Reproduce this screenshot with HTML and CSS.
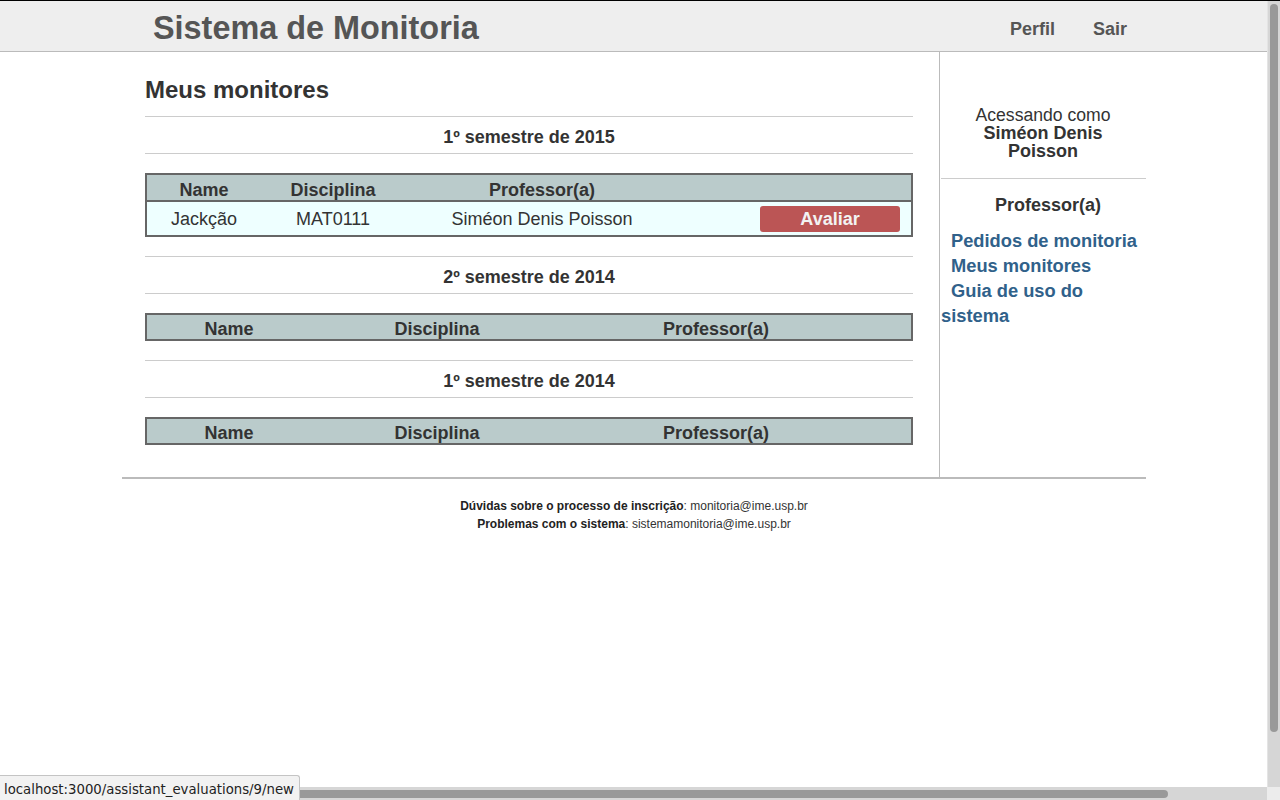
FILE: index.html
```html
<!DOCTYPE html>
<html lang="pt-BR">
<head>
<meta charset="utf-8">
<title>Sistema de Monitoria</title>
<link rel="stylesheet" href="styles.css">
</head>
<body>
<div class="page">
  <header class="topbar">
    <div class="topbar-inner">
      <h1 class="brand">Sistema de Monitoria</h1>
      <nav class="topnav">
        <a href="#">Perfil</a>
        <a href="#">Sair</a>
      </nav>
    </div>
  </header>

  <div class="container">
    <main class="main">
      <h2 class="page-title">Meus monitores</h2>

      <section class="semester">
        <h3 class="semester-title">1º semestre de 2015</h3>
        <table class="grid">
          <thead>
            <tr>
              <th class="a1">Name</th>
              <th class="a2">Disciplina</th>
              <th class="a3">Professor(a)</th>
              <th class="a4"></th>
            </tr>
          </thead>
          <tbody>
            <tr>
              <td>Jackção</td>
              <td>MAT0111</td>
              <td>Siméon Denis Poisson</td>
              <td class="act"><a class="btn" href="#">Avaliar</a></td>
            </tr>
          </tbody>
        </table>
      </section>

      <section class="semester">
        <h3 class="semester-title">2º semestre de 2014</h3>
        <table class="grid empty">
          <thead>
            <tr>
              <th class="b1">Name</th>
              <th class="b2">Disciplina</th>
              <th class="b3">Professor(a)</th>
              <th class="b4"></th>
            </tr>
          </thead>
        </table>
      </section>

      <section class="semester">
        <h3 class="semester-title">1º semestre de 2014</h3>
        <table class="grid empty">
          <thead>
            <tr>
              <th class="b1">Name</th>
              <th class="b2">Disciplina</th>
              <th class="b3">Professor(a)</th>
              <th class="b4"></th>
            </tr>
          </thead>
        </table>
      </section>
    </main>

    <aside class="sidebar">
      <div class="user">
        <span class="user-label">Acessando como</span><br>
        <strong>Siméon Denis Poisson</strong>
      </div>
      <hr class="side-rule">
      <div class="role">Professor(a)</div>
      <ul class="side-links">
        <li><a href="#">Pedidos de monitoria</a></li>
        <li><a href="#">Meus monitores</a></li>
        <li><a href="#">Guia de uso do sistema</a></li>
      </ul>
    </aside>
  </div>

  <footer class="footer">
    <p><strong>Dúvidas sobre o processo de inscrição</strong>: monitoria@ime.usp.br</p>
    <p><strong>Problemas com o sistema</strong>: sistemamonitoria@ime.usp.br</p>
  </footer>
</div>

<div class="vscroll"><div class="vthumb"></div></div>
<div class="hscroll"><div class="hthumb"></div></div>
<div class="scroll-corner"></div>
<div class="status">localhost:3000/assistant_evaluations/9/new</div>
</body>
</html>
```

FILE: styles.css
```css
html {
  border-top: 1px solid #000;
}
body {
  margin: 0 12px 0 0;
  font-family: "Liberation Sans", Arial, sans-serif;
  color: #333;
  background: #fff;
}
a {
  text-decoration: none;
}

/* header */
.topbar {
  background: #eeeeee;
  border-bottom: 1px solid #bbbbbb;
  height: 50px;
}
.topbar-inner {
  width: 1024px;
  margin: 0 auto;
  box-sizing: border-box;
  display: flex;
  justify-content: space-between;
  align-items: flex-start;
  padding: 0 19px 0 31px;
}
.brand {
  margin: 0;
  padding-top: 9px;
  font-size: 32.4px;
  line-height: 36px;
  font-weight: bold;
  color: #555;
}
.topnav {
  display: flex;
  gap: 38px;
  padding-top: 19px;
}
.topnav a {
  font-size: 18px;
  line-height: 18px;
  font-weight: bold;
  color: #555;
}

/* layout */
.container {
  width: 1024px;
  margin: 0 auto;
  display: flex;
}
.main {
  width: 818px;
  box-sizing: border-box;
  padding: 24px 26px 13px 23px;
  border-right: 1px solid #bbbbbb;
}
.page-title {
  margin: 0 0 12px;
  font-size: 24px;
  line-height: 28px;
  font-weight: bold;
  color: #333;
}

.semester {
  margin-bottom: 19px;
}
.semester-title {
  margin: 0 0 19px;
  border-top: 1px solid #cccccc;
  border-bottom: 1px solid #cccccc;
  padding: 10px 0 6px;
  text-align: center;
  font-size: 18px;
  line-height: 20px;
  font-weight: bold;
  color: #333;
}

/* tables */
.grid {
  width: 768px;
  border: 2px solid #666666;
  border-collapse: separate;
  border-spacing: 0;
  table-layout: fixed;
  font-size: 18px;
  color: #333;
}
.grid th {
  background: #bacbcb;
  height: 21px;
  padding: 4px 0 0;
  line-height: 20px;
  font-weight: bold;
  text-align: center;
  vertical-align: middle;
}
.grid.empty th {
  height: 20px;
}
.grid td {
  background: #eeffff;
  height: 33px;
  padding: 0;
  border-top: 2px solid #666666;
  text-align: center;
  vertical-align: middle;
  line-height: 20px;
}
.a1 { width: 114px; }
.a2 { width: 144px; }
.a3 { width: 274px; }
.a4 { width: 232px; }
.b1 { width: 164px; }
.b2 { width: 252px; }
.b3 { width: 306px; }
.b4 { width: 42px; }

.grid td.act {
  text-align: right;
  padding-right: 11px;
}
.btn {
  display: inline-block;
  width: 140px;
  height: 26px;
  line-height: 26px;
  text-align: center;
  background: #bb5555;
  color: #f2f2f2;
  font-weight: bold;
  font-size: 18px;
  border-radius: 3px;
  vertical-align: middle;
}

/* sidebar */
.sidebar {
  width: 206px;
  padding-top: 54px;
  font-size: 18px;
  color: #333;
}
.user {
  text-align: center;
  line-height: 18px;
  padding: 0 30px;
}
.user-label {
  font-size: 17.6px;
}
.user strong {
  font-weight: bold;
}
.side-rule {
  border: 0;
  border-top: 1px solid #cccccc;
  margin: 18px 0 17px 1px;
  height: 0;
}
.role {
  text-align: center;
  text-indent: 10px;
  font-weight: bold;
  line-height: 18px;
}
.side-links {
  list-style: none;
  margin: 14px 0 0;
  padding: 0 0 0 1px;
}
.side-links li {
  text-indent: 10px;
  line-height: 25px;
  font-size: 18.3px;
}
.side-links a {
  color: #30618a;
  font-weight: bold;
}

/* footer */
.footer {
  width: 1024px;
  margin: 0 auto;
  border-top: 2px solid #bbbbbb;
  padding-top: 18px;
  text-align: center;
  font-size: 12px;
  line-height: 18px;
  color: #333;
}
.footer p {
  margin: 0;
}
.footer strong {
  color: #222;
}

/* browser chrome overlays */
.vscroll {
  position: fixed;
  top: 1px;
  right: 0;
  width: 13px;
  bottom: 13px;
  background: #d6d6d6;
  border-left: 1px solid #e4e4e4;
  box-sizing: border-box;
}
.vthumb {
  position: absolute;
  left: 2px;
  top: 3px;
  width: 8px;
  height: 728px;
  background: #999999;
  border-radius: 4px;
}
.hscroll {
  position: fixed;
  left: 0;
  right: 13px;
  bottom: 0;
  height: 13px;
  background: #d6d6d6;
}
.hthumb {
  position: absolute;
  left: 2px;
  top: 3px;
  width: 1166px;
  height: 8px;
  background: #999999;
  border-radius: 4px;
}
.scroll-corner {
  position: fixed;
  right: 0;
  bottom: 0;
  width: 13px;
  height: 13px;
  background: #ececec;
}
.status {
  position: fixed;
  left: 0;
  bottom: 0;
  height: 25px;
  padding: 0 5px 0 4px;
  box-sizing: border-box;
  background: #f2f2f2;
  border: 1px solid #c4c4c4;
  border-left: 0;
  border-bottom: 0;
  border-top-right-radius: 3px;
  font-family: "DejaVu Sans Condensed", "DejaVu Sans", sans-serif;
  font-stretch: condensed;
  font-size: 14.75px;
  line-height: 26px;
  color: #222;
}
```
